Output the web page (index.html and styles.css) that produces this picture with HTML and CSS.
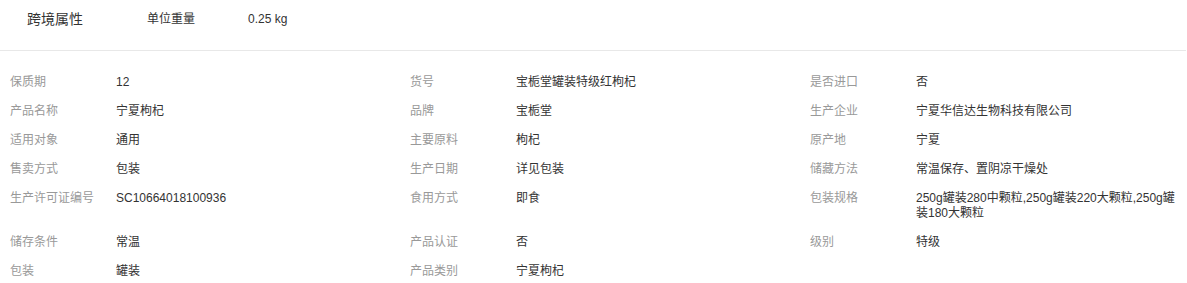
FILE: index.html
```html
<!DOCTYPE html>
<html lang="zh-CN">
<head>
<meta charset="utf-8">
<link rel="stylesheet" href="styles.css">
</head>
<body>
<div class="header">
  <div class="title">跨境属性</div>
  <div class="h-label">单位重量</div>
  <div class="h-value">0.25 kg</div>
</div>
<div class="attrs">
  <div class="item"><span class="label">保质期</span><span class="value">12</span></div>
  <div class="item"><span class="label">货号</span><span class="value">宝栀堂罐装特级红枸杞</span></div>
  <div class="item"><span class="label">是否进口</span><span class="value">否</span></div>

  <div class="item"><span class="label">产品名称</span><span class="value">宁夏枸杞</span></div>
  <div class="item"><span class="label">品牌</span><span class="value">宝栀堂</span></div>
  <div class="item"><span class="label">生产企业</span><span class="value">宁夏华信达生物科技有限公司</span></div>

  <div class="item"><span class="label">适用对象</span><span class="value">通用</span></div>
  <div class="item"><span class="label">主要原料</span><span class="value">枸杞</span></div>
  <div class="item"><span class="label">原产地</span><span class="value">宁夏</span></div>

  <div class="item"><span class="label">售卖方式</span><span class="value">包装</span></div>
  <div class="item"><span class="label">生产日期</span><span class="value">详见包装</span></div>
  <div class="item"><span class="label">储藏方法</span><span class="value">常温保存、置阴凉干燥处</span></div>

  <div class="item"><span class="label">生产许可证编号</span><span class="value">SC10664018100936</span></div>
  <div class="item"><span class="label">食用方式</span><span class="value">即食</span></div>
  <div class="item"><span class="label">包装规格</span><span class="value">250g罐装280中颗粒,250g罐装220大颗粒,250g罐装180大颗粒</span></div>

  <div class="item"><span class="label">储存条件</span><span class="value">常温</span></div>
  <div class="item"><span class="label">产品认证</span><span class="value">否</span></div>
  <div class="item"><span class="label">级别</span><span class="value">特级</span></div>

  <div class="item"><span class="label">包装</span><span class="value">罐装</span></div>
  <div class="item"><span class="label">产品类别</span><span class="value">宁夏枸杞</span></div>
</div>
</body>
</html>
```
FILE: styles.css
```css
html, body {
  margin: 0;
  padding: 0;
  background: #fff;
}
body {
  font-family: "Liberation Sans", "Noto Sans CJK SC", sans-serif;
  color: #333;
}
.header {
  display: flex;
  align-items: center;
  height: 38px;
  padding: 0 0 12px 27px;
  border-bottom: 1px solid #e8e8e8;
  margin-right: 1px;
}
.title {
  width: 120px;
  font-size: 14px;
  line-height: 18px;
  color: #333;
}
.h-label {
  width: 101px;
  font-size: 12px;
  line-height: 18px;
  color: #333;
}
.h-value {
  font-size: 12px;
  line-height: 18px;
  color: #333;
}
.attrs {
  display: grid;
  grid-template-columns: 400px 400px 1fr;
  row-gap: 14px;
  padding: 24px 10px 0 10px;
  font-size: 12px;
  line-height: 15px;
}
.item {
  display: flex;
  min-width: 0;
}
.label {
  flex: 0 0 106px;
  color: #999;
  white-space: nowrap;
}
.value {
  flex: 1 1 auto;
  min-width: 0;
  color: #333;
}
```
